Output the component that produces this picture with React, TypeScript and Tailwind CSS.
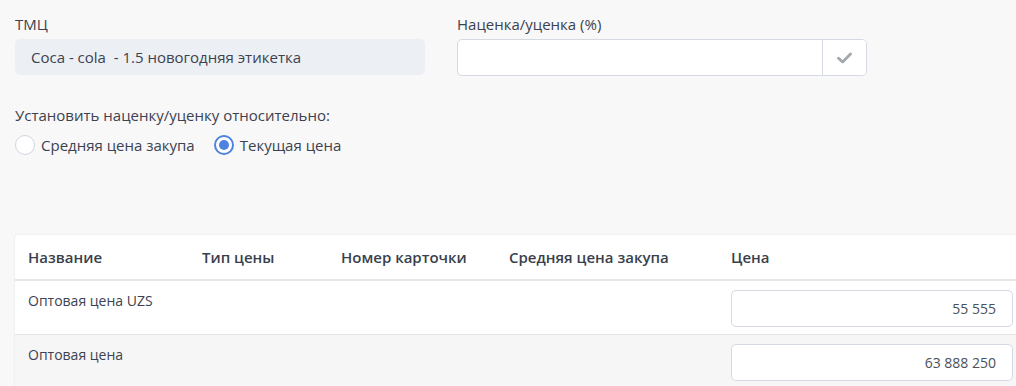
import { useState } from 'react';

type Row = { name: string; priceType: string; card: string; avg: string; price: string };

const ROWS: Row[] = [
  { name: 'Оптовая цена UZS', priceType: '', card: '', avg: '', price: '55 555' },
  { name: 'Оптовая цена', priceType: '', card: '', avg: '', price: '63 888 250' },
];

const COLS = 'grid grid-cols-[174px_139px_168px_222px_1fr]';

function Radio({ checked, label, onClick }: { checked: boolean; label: string; onClick: () => void }) {
  return (
    <button type="button" onClick={onClick} className="flex items-center gap-[6px]">
      <span
        className={`flex h-[20px] w-[20px] items-center justify-center rounded-full bg-white ${
          checked ? 'border-2 border-[#4f83e0]' : 'border border-[#cfd5e2]'
        }`}
      >
        {checked && <span className="h-[10px] w-[10px] rounded-full bg-[#4f83e0]" />}
      </span>
      <span className="text-[15px] leading-[20px] text-[#3c4250]">{label}</span>
    </button>
  );
}

export default function App() {
  const [relative, setRelative] = useState<'avg' | 'current'>('current');
  const [markup, setMarkup] = useState('');

  return (
    <div
      className="h-[386px] w-[1016px] overflow-hidden bg-[#f8f8f8] pl-[15px] text-[15px] text-[#3c4250]"
      style={{ fontFamily: '"Open Sans", "Noto Sans", sans-serif' }}
    >
      {/* Top fields */}
      <div className="flex gap-[32px] pt-[14px]">
        <div className="w-[410px]">
          <label className="mb-[5px] block h-[20px] text-[15px] leading-[20px] text-[#3c4250]">ТМЦ</label>
          <div className="flex h-[36px] items-center rounded-[5px] bg-[#eceff3] px-[16px] text-[15px]">
            Coca - cola&nbsp; - 1.5 новогодняя этикетка
          </div>
        </div>
        <div className="w-[410px]">
          <label className="mb-[5px] block h-[20px] text-[15px] leading-[20px] text-[#3c4250]">Наценка/уценка (%)</label>
          <div className="flex h-[37px] overflow-hidden rounded-[5px] border border-[#d5d9e2] bg-white">
            <input
              value={markup}
              onChange={e => setMarkup(e.target.value)}
              className="min-w-0 flex-1 px-3 text-[15px] outline-none"
            />
            <button type="button" className="flex w-[44px] items-center justify-center border-l border-[#d5d9e2] bg-white">
              <svg width="15" height="12" viewBox="0 0 15 12">
                <path d="M1.5 6.2 L5.6 10 L13.5 2" fill="none" stroke="#a3a7ae" strokeWidth="2.8" strokeLinecap="round" strokeLinejoin="round" />
              </svg>
            </button>
          </div>
        </div>
      </div>

      {/* Relative to */}
      <div className="mt-[29px] h-[20px] leading-[20px]">Установить наценку/уценку относительно:</div>
      <div className="mt-[10px] flex gap-[19px]">
        <Radio checked={relative === 'avg'} label="Средняя цена закупа" onClick={() => setRelative('avg')} />
        <Radio checked={relative === 'current'} label="Текущая цена" onClick={() => setRelative('current')} />
      </div>

      {/* Table */}
      <div className="mt-[80px] w-[1020px] rounded-tl-[4px] bg-white shadow-[0_0_3px_rgba(0,0,0,0.08)]">
        <div className={`${COLS} h-[46px] items-center border-b-2 border-[#e6e6e6] px-[13px] font-semibold leading-[20px] text-[#3a3f4c]`}>
          <div>Название</div>
          <div>Тип цены</div>
          <div>Номер карточки</div>
          <div>Средняя цена закупа</div>
          <div>Цена</div>
        </div>
        {ROWS.map((r, i) => (
          <div
            key={r.name}
            className={`${COLS} h-[54px] border-b border-[#e6e6e6] px-[13px] pt-[9px] text-[14px] ${
              i % 2 === 1 ? 'bg-[#f6f6f6]' : 'bg-white'
            }`}
          >
            <div className="pt-[1px] leading-[20px]">{r.name}</div>
            <div>{r.priceType}</div>
            <div>{r.card}</div>
            <div>{r.avg}</div>
            <div className="pr-[20px]">
              <div className="flex h-[37px] w-[282px] items-center justify-end rounded-[5px] border border-[#d5d9e2] bg-white pr-[16px] text-[14px] text-[#4a505c]">
                {r.price}
              </div>
            </div>
          </div>
        ))}
      </div>
    </div>
  );
}
